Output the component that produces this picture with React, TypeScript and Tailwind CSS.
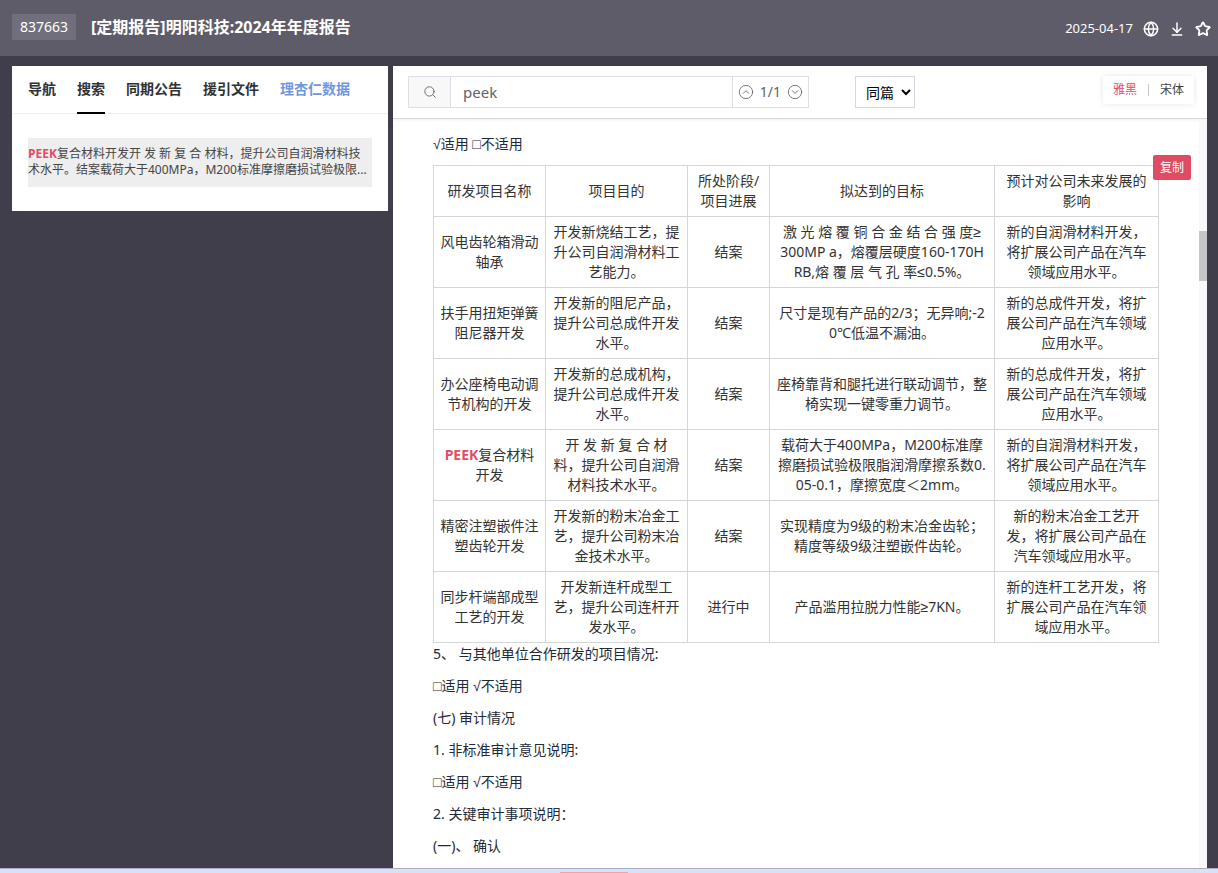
import { ArrowDownToLine, CircleChevronDown, CircleChevronUp, Globe, Search, Star } from "lucide-react";
import type { ReactNode } from "react";

type Project = {
  name: ReactNode;
  purpose: string;
  stage: string;
  goal: string;
  impact: string;
};

const tabs = [
  { label: "导航" },
  { label: "搜索", active: true },
  { label: "同期公告" },
  { label: "援引文件" },
  { label: "理杏仁数据", brand: true },
];

const projects: Project[] = [
  {
    name: "风电齿轮箱滑动轴承",
    purpose: "开发新烧结工艺，提升公司自润滑材料工艺能力。",
    stage: "结案",
    goal: "激 光 熔 覆 铜 合 金 结 合 强 度≥\n300MP a，熔覆层硬度160-170H\nRB,熔 覆 层 气 孔 率≤0.5%。",
    impact: "新的自润滑材料开发，将扩展公司产品在汽车领域应用水平。",
  },
  {
    name: "扶手用扭矩弹簧阻尼器开发",
    purpose: "开发新的阻尼产品，提升公司总成件开发水平。",
    stage: "结案",
    goal: "尺寸是现有产品的2/3；无异响;-2\n0℃低温不漏油。",
    impact: "新的总成件开发，将扩展公司产品在汽车领域应用水平。",
  },
  {
    name: "办公座椅电动调节机构的开发",
    purpose: "开发新的总成机构，提升公司总成件开发水平。",
    stage: "结案",
    goal: "座椅靠背和腿托进行联动调节，整椅实现一键零重力调节。",
    impact: "新的总成件开发，将扩展公司产品在汽车领域应用水平。",
  },
  {
    name: <><Hit>PEEK</Hit>复合材料开发</>,
    purpose: "开 发 新 复 合 材料，提升公司自润滑材料技术水平。",
    stage: "结案",
    goal: "载荷大于400MPa，M200标准摩\n擦磨损试验极限脂润滑摩擦系数0.\n05-0.1，摩擦宽度＜2mm。",
    impact: "新的自润滑材料开发，将扩展公司产品在汽车领域应用水平。",
  },
  {
    name: "精密注塑嵌件注塑齿轮开发",
    purpose: "开发新的粉末冶金工艺，提升公司粉末冶金技术水平。",
    stage: "结案",
    goal: "实现精度为9级的粉末冶金齿轮；\n精度等级9级注塑嵌件齿轮。",
    impact: "新的粉末冶金工艺开发，将扩展公司产品在汽车领域应用水平。",
  },
  {
    name: "同步杆端部成型工艺的开发",
    purpose: "开发新连杆成型工艺，提升公司连杆开发水平。",
    stage: "进行中",
    goal: "产品滥用拉脱力性能≥7KN。",
    impact: "新的连杆工艺开发，将扩展公司产品在汽车领域应用水平。",
  },
];

const paragraphs = [
  "5、 与其他单位合作研发的项目情况:",
  "□适用 √不适用",
  "(七) 审计情况",
  "1. 非标准审计意见说明:",
  "□适用 √不适用",
  "2. 关键审计事项说明：",
  "(一)、 确认",
];

function Hit({ children }: { children: ReactNode }) {
  return <b className="font-bold text-[#e14d66]">{children}</b>;
}

function Header() {
  return (
    <header className="flex h-14 shrink-0 items-center bg-[#5e5c68] pl-3 pr-[7px] text-white">
      <span className="mb-0.5 flex h-[26px] items-center bg-[#716f7b] px-2 text-sm">837663</span>
      <h1 className="mb-0.5 ml-[15px] text-base font-bold">[定期报告]明阳科技:2024年年度报告</h1>
      <div className="ml-auto mt-0.5 flex items-center gap-2.5 text-[13px]">
        <time dateTime="2025-04-17">2025-04-17</time>
        <button type="button" aria-label="语言"><Globe size={16} strokeWidth={2.25} /></button>
        <button type="button" aria-label="下载"><ArrowDownToLine size={16} strokeWidth={2.25} /></button>
        <button type="button" aria-label="收藏"><Star size={16} strokeWidth={2.75} /></button>
      </div>
    </header>
  );
}

function Sidebar() {
  return (
    <aside className="w-94 shrink-0 self-start bg-white pb-6">
      <nav className="flex h-12 gap-[21px] border-b border-[#f0f0f0] px-4 text-sm font-bold text-[#303133]">
        {tabs.map((tab) => (
          <a
            key={tab.label}
            href="#"
            className={
              tab.active
                ? "h-12 border-b-2 border-black pt-3 leading-[22px]"
                : tab.brand
                  ? "pt-3 leading-[22px] text-[#6f97de]"
                  : "pt-3 leading-[22px]"
            }
          >
            {tab.label}
          </a>
        ))}
      </nav>
      <p className="mx-4 mt-6 bg-[#eeeeee] pb-[9px] pt-2 text-xs leading-4 text-[#444444]">
        <Hit>PEEK</Hit>复合材料开发开 发 新 复 合 材料，提升公司自润滑材料技术水平。结案载荷大于400MPa，M200标准摩擦磨损试验极限...
      </p>
    </aside>
  );
}

function Toolbar() {
  return (
    <div className="flex h-[53px] shrink-0 items-start border-b border-[#d8d9dc] pl-[15px] pr-[13px] pt-2.5 shadow-[0_1px_3px_rgba(0,0,0,0.08)]">
      <div className="flex h-8 w-[401px] border border-[#dcdfe6] text-[#606266]">
        <button type="button" aria-label="搜索" className="flex w-[42px] items-center justify-center border-r border-[#dcdfe6] bg-[#f8f8f9]">
          <Search size={14} strokeWidth={1.5} />
        </button>
        <input type="text" aria-label="关键词" defaultValue="peek" className="min-w-0 flex-1 px-3 text-[15px] outline-none" />
        <div className="flex items-center gap-1.5 border-l border-[#dcdfe6] px-[5px] text-sm">
          <button type="button" aria-label="上一个"><CircleChevronUp size={16} strokeWidth={1.25} /></button>
          1/1
          <button type="button" aria-label="下一个"><CircleChevronDown size={16} strokeWidth={1.25} /></button>
        </div>
      </div>
      <select aria-label="范围" className="ml-[46px] h-8 w-15 border border-[#d4d7dd] bg-white pl-1.5 text-sm text-black">
        <option>同篇</option>
      </select>
      <div className="ml-auto flex h-7 items-center px-2.5 text-xs text-[#444444] shadow-[0_0_6px_rgba(0,0,0,0.1)]">
        <button type="button" className="text-[#e14d66]">雅黑</button>
        <span className="mx-[11px] h-3 w-px bg-[#c4c4c8]" />
        <button type="button">宋体</button>
      </div>
    </div>
  );
}

function ProjectTable() {
  return (
    <div className="relative">
      <table className="w-full table-fixed border-collapse text-center text-sm leading-5 text-[#333333] [&_td]:border [&_td]:border-[#d5d6d8] [&_td]:px-1.5 [&_td]:py-[5px] [&_th]:border [&_th]:border-[#d5d6d8] [&_th]:px-1.5 [&_th]:py-[5px] [&_th]:font-normal">
        <colgroup>
          <col className="w-28" />
          <col className="w-[142px]" />
          <col className="w-[82px]" />
          <col />
          <col className="w-[164px]" />
        </colgroup>
        <thead>
          <tr>
            <th>研发项目名称</th>
            <th>项目目的</th>
            <th>所处阶段/<br />项目进展</th>
            <th>拟达到的目标</th>
            <th>预计对公司未来发展的影响</th>
          </tr>
        </thead>
        <tbody>
          {projects.map((p) => (
            <tr key={p.purpose}>
              <td>{p.name}</td>
              <td>{p.purpose}</td>
              <td>{p.stage}</td>
              <td className="whitespace-pre-line">{p.goal}</td>
              <td>{p.impact}</td>
            </tr>
          ))}
        </tbody>
      </table>
      <button type="button" className="absolute -right-8 -top-2.5 h-[25px] rounded-xs bg-[#e04b64] px-[7px] text-xs text-white">
        复制
      </button>
    </div>
  );
}

export default function App() {
  return (
    <div className="flex h-screen flex-col bg-[#413e4b] font-['Noto_Sans','Liberation_Sans','Noto_Sans_CJK_SC',sans-serif]" lang="zh-CN">
      <Header />
      <div className="flex min-h-0 flex-1 gap-[5px] pl-3 pr-[11px] pt-2.5">
        <Sidebar />
        <main className="flex min-w-0 flex-1 flex-col bg-white">
          <Toolbar />
          <div className="flex min-h-0 flex-1">
            <article className="min-w-0 flex-1 overflow-hidden px-10 pt-3.5 text-sm leading-[22px] text-[#1f2937]">
              <p className="mb-2.5">√适用 □不适用</p>
              <ProjectTable />
              {paragraphs.map((text, i) => (
                <p key={i} className="mb-2.5">{text}</p>
              ))}
            </article>
            <div className="w-2 shrink-0 bg-[#f8f8f9] pt-28">
              <div className="h-[50px] bg-[#c6c6c8]" />
            </div>
          </div>
        </main>
      </div>
      <footer className="flex h-[5px] shrink-0 items-end border-t border-[#a9afc2] bg-[#d9e1f5]">
        <div className="ml-[46%] h-px w-17 bg-[#f0a5a5]" />
      </footer>
    </div>
  );
}
